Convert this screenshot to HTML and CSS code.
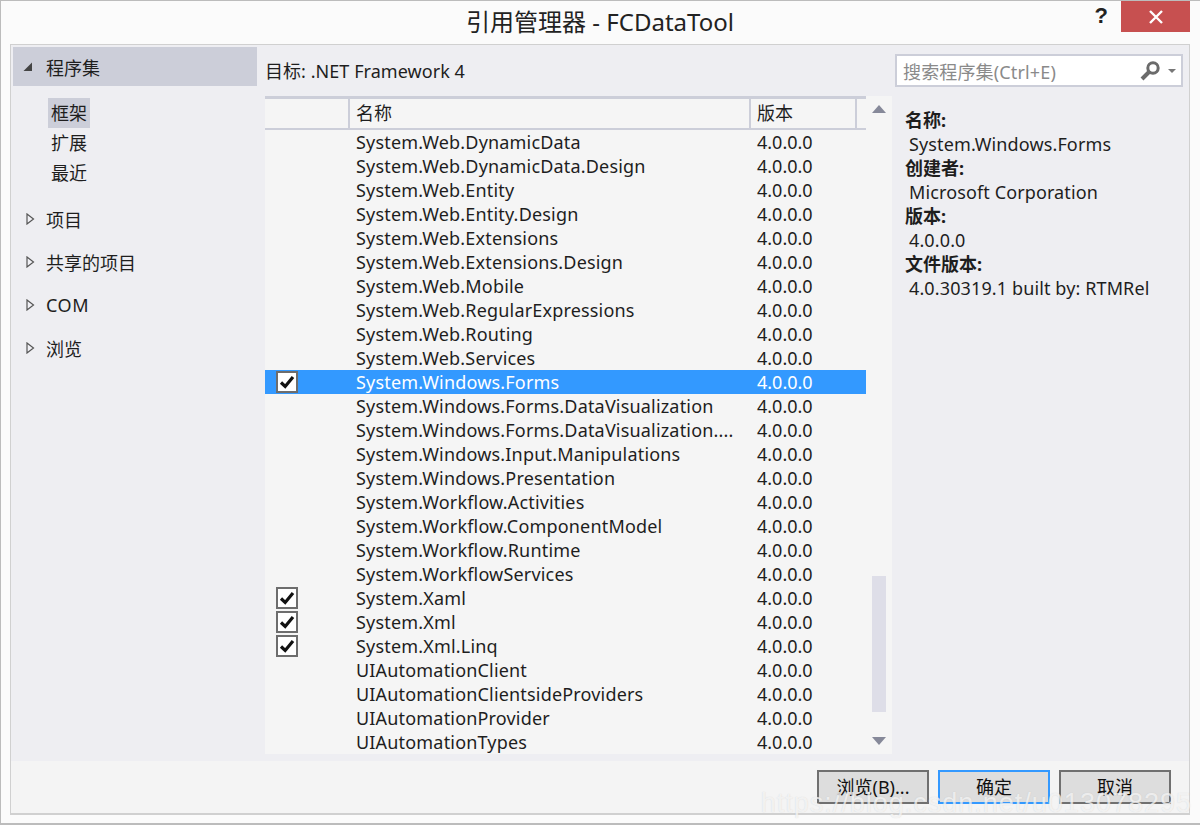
FILE: index.html
```html
<!DOCTYPE html>
<html lang="zh">
<head>
<meta charset="utf-8">
<title>引用管理器 - FCDataTool</title>
<link rel="stylesheet" href="styles.css">
</head>
<body>
<div class="window">
  <header class="titlebar">
    <div class="title">引用管理器 - FCDataTool</div>
    <div class="help">?</div>
    <div class="close"><svg width="16" height="16" viewBox="0 0 16 16"><path d="M2 2L14 14M14 2L2 14" stroke="#fff" stroke-width="2.4" fill="none"/></svg></div>
  </header>
  <div class="panel">
    <div class="main">
      <nav class="nav">
        <div class="nav-head"><svg class="tri" width="10" height="10" viewBox="0 0 10 10"><path d="M9 0.5V9H0.5Z" fill="#444"/></svg><span>程序集</span></div>
        <div class="nav-sub">
          <div class="nav-item nav-sel">框架</div>
          <div class="nav-item">扩展</div>
          <div class="nav-item">最近</div>
        </div>
        <div class="nav-group"><svg class="tri" width="9" height="12" viewBox="0 0 9 12"><path d="M1 1L7.5 6L1 11Z" fill="#f0f0f5" stroke="#555" stroke-width="1.2"/></svg><span>项目</span></div>
        <div class="nav-group"><svg class="tri" width="9" height="12" viewBox="0 0 9 12"><path d="M1 1L7.5 6L1 11Z" fill="#f0f0f5" stroke="#555" stroke-width="1.2"/></svg><span>共享的项目</span></div>
        <div class="nav-group"><svg class="tri" width="9" height="12" viewBox="0 0 9 12"><path d="M1 1L7.5 6L1 11Z" fill="#f0f0f5" stroke="#555" stroke-width="1.2"/></svg><span class="latin">COM</span></div>
        <div class="nav-group"><svg class="tri" width="9" height="12" viewBox="0 0 9 12"><path d="M1 1L7.5 6L1 11Z" fill="#f0f0f5" stroke="#555" stroke-width="1.2"/></svg><span>浏览</span></div>
      </nav>
      <section class="center">
        <div class="target">目标: .NET Framework 4</div>
        <div class="listbox">
          <div class="table">
            <div class="thead">
              <div class="th th-check"></div>
              <div class="th th-name">名称</div>
              <div class="th th-ver">版本</div>
            </div>
            <div class="row"><span class="check"></span><span class="name">System.Web.DynamicData</span><span class="ver">4.0.0.0</span></div>
            <div class="row"><span class="check"></span><span class="name">System.Web.DynamicData.Design</span><span class="ver">4.0.0.0</span></div>
            <div class="row"><span class="check"></span><span class="name">System.Web.Entity</span><span class="ver">4.0.0.0</span></div>
            <div class="row"><span class="check"></span><span class="name">System.Web.Entity.Design</span><span class="ver">4.0.0.0</span></div>
            <div class="row"><span class="check"></span><span class="name">System.Web.Extensions</span><span class="ver">4.0.0.0</span></div>
            <div class="row"><span class="check"></span><span class="name">System.Web.Extensions.Design</span><span class="ver">4.0.0.0</span></div>
            <div class="row"><span class="check"></span><span class="name">System.Web.Mobile</span><span class="ver">4.0.0.0</span></div>
            <div class="row"><span class="check"></span><span class="name">System.Web.RegularExpressions</span><span class="ver">4.0.0.0</span></div>
            <div class="row"><span class="check"></span><span class="name">System.Web.Routing</span><span class="ver">4.0.0.0</span></div>
            <div class="row"><span class="check"></span><span class="name">System.Web.Services</span><span class="ver">4.0.0.0</span></div>
            <div class="row row-sel"><span class="check"><span class="box"><svg width="16" height="14" viewBox="0 0 16 14"><path d="M2 7.5L6.2 11.5L14 2" stroke="#111" stroke-width="3.2" fill="none"/></svg></span></span><span class="name">System.Windows.Forms</span><span class="ver">4.0.0.0</span></div>
            <div class="row"><span class="check"></span><span class="name">System.Windows.Forms.DataVisualization</span><span class="ver">4.0.0.0</span></div>
            <div class="row"><span class="check"></span><span class="name">System.Windows.Forms.DataVisualization....</span><span class="ver">4.0.0.0</span></div>
            <div class="row"><span class="check"></span><span class="name">System.Windows.Input.Manipulations</span><span class="ver">4.0.0.0</span></div>
            <div class="row"><span class="check"></span><span class="name">System.Windows.Presentation</span><span class="ver">4.0.0.0</span></div>
            <div class="row"><span class="check"></span><span class="name">System.Workflow.Activities</span><span class="ver">4.0.0.0</span></div>
            <div class="row"><span class="check"></span><span class="name">System.Workflow.ComponentModel</span><span class="ver">4.0.0.0</span></div>
            <div class="row"><span class="check"></span><span class="name">System.Workflow.Runtime</span><span class="ver">4.0.0.0</span></div>
            <div class="row"><span class="check"></span><span class="name">System.WorkflowServices</span><span class="ver">4.0.0.0</span></div>
            <div class="row"><span class="check"><span class="box"><svg width="16" height="14" viewBox="0 0 16 14"><path d="M2 7.5L6.2 11.5L14 2" stroke="#111" stroke-width="3.2" fill="none"/></svg></span></span><span class="name">System.Xaml</span><span class="ver">4.0.0.0</span></div>
            <div class="row"><span class="check"><span class="box"><svg width="16" height="14" viewBox="0 0 16 14"><path d="M2 7.5L6.2 11.5L14 2" stroke="#111" stroke-width="3.2" fill="none"/></svg></span></span><span class="name">System.Xml</span><span class="ver">4.0.0.0</span></div>
            <div class="row"><span class="check"><span class="box"><svg width="16" height="14" viewBox="0 0 16 14"><path d="M2 7.5L6.2 11.5L14 2" stroke="#111" stroke-width="3.2" fill="none"/></svg></span></span><span class="name">System.Xml.Linq</span><span class="ver">4.0.0.0</span></div>
            <div class="row"><span class="check"></span><span class="name">UIAutomationClient</span><span class="ver">4.0.0.0</span></div>
            <div class="row"><span class="check"></span><span class="name">UIAutomationClientsideProviders</span><span class="ver">4.0.0.0</span></div>
            <div class="row"><span class="check"></span><span class="name">UIAutomationProvider</span><span class="ver">4.0.0.0</span></div>
            <div class="row"><span class="check"></span><span class="name">UIAutomationTypes</span><span class="ver">4.0.0.0</span></div>
          </div>
          <div class="scrollbar">
            <svg class="arrow-up" width="14" height="8" viewBox="0 0 14 8"><path d="M7 0L14 8H0Z" fill="#868999"/></svg>
            <div class="track"><div class="thumb"></div></div>
            <svg class="arrow-down" width="14" height="8" viewBox="0 0 14 8"><path d="M0 0H14L7 8Z" fill="#868999"/></svg>
          </div>
        </div>
      </section>
      <aside class="side">
        <div class="search">
          <span class="placeholder">搜索程序集(Ctrl+E)</span>
          <svg class="lens" width="22" height="20" viewBox="0 0 22 20"><circle cx="14" cy="7" r="5.2" fill="none" stroke="#6b6b6b" stroke-width="3"/><path d="M10 11L3 18" stroke="#6b6b6b" stroke-width="4"/></svg>
          <svg class="drop" width="8" height="4" viewBox="0 0 8 4"><path d="M0 0H8L4 4Z" fill="#777"/></svg>
        </div>
        <div class="details">
          <div class="d-label">名称:</div>
          <div class="d-value">System.Windows.Forms</div>
          <div class="d-label">创建者:</div>
          <div class="d-value">Microsoft Corporation</div>
          <div class="d-label">版本:</div>
          <div class="d-value">4.0.0.0</div>
          <div class="d-label">文件版本:</div>
          <div class="d-value">4.0.30319.1 built by: RTMRel</div>
        </div>
      </aside>
    </div>
    <footer class="footer">
      <button class="btn">浏览(B)...</button>
      <button class="btn btn-default">确定</button>
      <button class="btn">取消</button>
    </footer>
  </div>
  <div class="watermark">https://blog.csdn.net/u013078295</div>
</div>
</body>
</html>
```
FILE: styles.css
```css
* { box-sizing: border-box; }
html, body { margin: 0; padding: 0; background: #fff; }
body {
  width: 1200px;
  height: 825px;
  overflow: hidden;
  font-family: "Noto Sans", "Noto Sans CJK SC", sans-serif;
  font-size: 18px;
  color: #1e1e1e;
}
.window {
  position: relative;
  width: 1200px;
  height: 825px;
  display: flex;
  flex-direction: column;
  background: #fbfbfb;
  border: 1px solid #bcbcbc;
  border-right: 0;
  border-bottom-width: 2px;
  padding: 0 10px 8px 9px;
}
.titlebar {
  position: relative;
  height: 43px;
  flex: none;
  display: flex;
  justify-content: center;
}
.title { font-size: 24px; line-height: 42px; color: #222; }
.help {
  position: absolute;
  right: 82px;
  top: 2px;
  font-family: "Liberation Sans", sans-serif;
  font-weight: 700;
  font-size: 22px;
  line-height: 26px;
  color: #222;
}
.close {
  position: absolute;
  right: 0;
  top: 0;
  width: 69px;
  height: 31px;
  background: #c75050;
  display: flex;
  align-items: center;
  justify-content: center;
}
.panel {
  flex: 1;
  display: flex;
  flex-direction: column;
  border: 1px solid #d0d0d0;
  border-bottom-width: 2px;
  background: #f4f4f4;
  min-height: 0;
}
.main {
  height: 716px;
  flex: none;
  display: flex;
  background: #eeeef2;
}
.nav { width: 254px; flex: none; padding: 2px 0 0 2px; }
.nav-head {
  height: 39px;
  width: 244px;
  background: #ccced9;
  display: flex;
  align-items: center;
  padding-left: 10px;
}
.nav-head .tri { margin-right: 13px; }
.nav-sub { padding: 12px 0 0 35px; height: 111px; }
.nav-item {
  width: 42px;
  height: 30px;
  line-height: 30px;
  text-align: center;
}
.nav-sel { background: #ccced9; }
.nav-group {
  height: 43px;
  display: flex;
  align-items: center;
  padding-left: 13px;
}
.nav-group .tri { margin-right: 11px; }
.latin { letter-spacing: 0.6px; }
.center {
  width: 627px;
  flex: none;
  display: flex;
  flex-direction: column;
}
.target { height: 51px; padding: 13px 0 0; line-height: 26px; letter-spacing: 0.05px; }
.listbox {
  height: 658px;
  background: #f5f5f5;
  display: flex;
}
.table { width: 601px; flex: none; }
.thead {
  height: 34px;
  display: flex;
  border-top: 3px solid #ccced9;
  border-bottom: 2px solid #ccced9;
}
.th { line-height: 29px; padding-left: 6px; border-right: 2px solid #ccced9; }
.th-check { width: 85px; }
.th-name { width: 401px; }
.th-ver { width: 106px; }
.row {
  height: 24px;
  display: flex;
  align-items: center;
  line-height: 24px;
  white-space: nowrap;
}
.row-sel { background: #3399ff; color: #fff; }
.check { width: 91px; flex: none; padding-left: 11px; display: flex; }
.name { width: 401px; flex: none; letter-spacing: 0.18px; }
.box {
  width: 22px;
  height: 22px;
  border: 2px solid #6d6d6d;
  background: #fff;
  display: flex;
  align-items: center;
  justify-content: center;
}
.ver { flex: none; }
.scrollbar {
  width: 26px;
  flex: none;
  padding: 9px 6px 0;
  display: flex;
  flex-direction: column;
  align-items: stretch;
}
.arrow-up, .arrow-down { flex: none; display: block; }
.track { height: 624px; padding-top: 463px; }
.thumb { height: 136px; background: #dedee8; }
.side { flex: 1; min-width: 0; padding: 9px 6px 0 4px; display: flex; flex-direction: column; }
.search {
  height: 33px;
  width: 288px;
  margin-left: -1px;
  border: 2px solid #ccced9;
  background: #fff;
  display: flex;
  align-items: center;
  padding-left: 6px;
}
.placeholder { flex: 1; color: #8a8a8a; letter-spacing: 0.15px; }
.lens { margin-right: 7px; }
.drop { margin-right: 5px; }
.details { padding: 21px 0 0 9px; line-height: 24px; }
.d-label { font-weight: 700; color: #1e1e1e; }
.d-value { padding-left: 4px; letter-spacing: 0.12px; }
.footer {
  flex: 1;
  display: flex;
  justify-content: flex-end;
  align-items: flex-start;
  gap: 9px;
  padding: 9px 18px 0 0;
}
.btn {
  width: 112px;
  height: 34px;
  border: 2px solid #707070;
  background: #dddddd;
  font-family: inherit;
  font-size: 18px;
  line-height: 28px;
  color: #111;
  padding: 0;
}
.btn-default { border-color: #3399ff; }
.watermark {
  position: absolute;
  right: 8px;
  bottom: 4px;
  font-family: "Liberation Sans", sans-serif;
  font-size: 27px;
  letter-spacing: 1px;
  color: rgba(255, 255, 255, 0.7);
  text-shadow: 0 0 1px rgba(150, 150, 150, 0.35);
  pointer-events: none;
  white-space: nowrap;
}
```
